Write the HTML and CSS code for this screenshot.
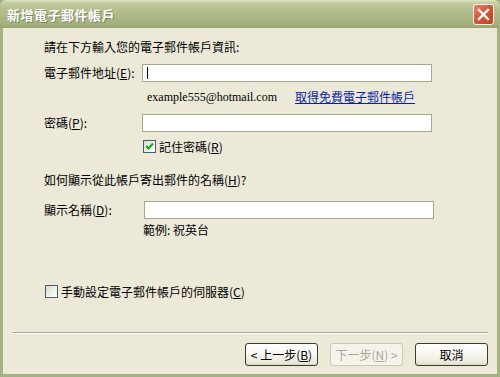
FILE: index.html
```html
<!DOCTYPE html>
<html lang="zh-Hant">
<head>
<meta charset="utf-8">
<link rel="stylesheet" href="styles.css">
</head>
<body>
<div class="window">
  <div class="titlebar">
    <span class="title">新增電子郵件帳戶</span>
    <span class="close"><svg width="13" height="13" viewBox="0 0 13 13"><path d="M2 2 L11 11 M11 2 L2 11" stroke="#fff" stroke-width="2.4" stroke-linecap="square"/></svg></span>
  </div>
  <div class="content">
    <div class="form">
      <div class="intro">請在下方輸入您的電子郵件帳戶資訊:</div>
      <div class="row row-email">
        <span class="label">電子郵件地址(<u>E</u>):</span>
        <span class="input"><span class="caret"></span></span>
      </div>
      <div class="hint">
        <span class="example">example555@hotmail.com</span>
        <a class="link">取得免費電子郵件帳戶</a>
      </div>
      <div class="row row-pass">
        <span class="label">密碼(<u>P</u>):</span>
        <span class="input"></span>
      </div>
      <div class="check check-remember">
        <span class="box checked"><svg width="9" height="9" viewBox="0 0 9 9"><path d="M1 4 L3.5 6.5 L8 1.5" stroke="#21a121" stroke-width="2" fill="none"/></svg></span>
        <span>記住密碼(<u>R</u>)</span>
      </div>
      <div class="question">如何顯示從此帳戶寄出郵件的名稱(<u>H</u>)?</div>
      <div class="row row-name">
        <span class="label label-name">顯示名稱(<u>D</u>):</span>
        <span class="input"></span>
      </div>
      <div class="sample">範例: 祝英台</div>
      <div class="check check-manual">
        <span class="box"></span>
        <span>手動設定電子郵件帳戶的伺服器(<u>C</u>)</span>
      </div>
    </div>
    <div class="footer">
      <div class="separator"></div>
      <div class="buttons">
        <span class="btn">&lt; 上一步(<u>B</u>)</span>
        <span class="btn disabled">下一步(<u>N</u>) &gt;</span>
        <span class="btn">取消</span>
      </div>
    </div>
  </div>
</div>
</body>
</html>
```

FILE: styles.css
```css
* { box-sizing: border-box; }
html, body { margin: 0; padding: 0; }
body {
  width: 500px;
  height: 377px;
  overflow: hidden;
  font-family: "Noto Sans CJK TC", "Liberation Sans", sans-serif;
  font-size: 12px;
  color: #000;
}
u { text-decoration: underline; }
.window {
  width: 500px;
  height: 377px;
  display: flex;
  flex-direction: column;
  background: #a4b185;
}
.titlebar {
  height: 28px;
  flex: none;
  display: flex;
  align-items: center;
  justify-content: space-between;
  padding: 0 6px 0 7px;
  background: linear-gradient(to bottom, #dfe5c4 0px, #c3cc9e 3px, #b4bf8d 10px, #aab684 18px, #a4b07d 24px, #97a36f 28px);
  border-radius: 6px 6px 0 0;
}
.title {
  color: #fff;
  font-weight: bold;
  font-size: 13px;
  letter-spacing: 0.5px;
  text-shadow: 1px 1px 0 #7d8660;
}
.close {
  width: 21px;
  height: 21px;
  border: 1px solid #f4f2e8;
  border-radius: 3px;
  background: linear-gradient(135deg, #e98566 0%, #d7553a 45%, #c2401f 100%);
  display: flex;
  align-items: center;
  justify-content: center;
}
.content {
  flex: 1;
  margin: 0 3px 3px 3px;
  background: #ece9d8;
  display: flex;
  flex-direction: column;
  justify-content: space-between;
}
.form { padding-left: 41px; }
.intro { margin-top: 11px; height: 16px; line-height: 16px; }
.row { display: flex; align-items: center; height: 18px; }
.label { width: 98px; flex: none; line-height: 16px; }
.label-name { width: 100px; }
.input {
  width: 290px;
  height: 18px;
  background: #fff;
  border: 1px solid #a5a98d;
  display: flex;
  align-items: center;
  padding-left: 4px;
}
.caret { width: 1px; height: 12px; background: #000; }
.row-email { margin-top: 9px; }
.hint {
  margin-top: 7px;
  height: 16px;
  line-height: 16px;
  padding-left: 103px;
  display: flex;
}
.example {
  font-family: "Liberation Serif", serif;
  font-size: 12px;
  width: 148px;
  flex: none;
}
.link { color: #0a1fa3; text-decoration: underline; }
.row-pass { margin-top: 9px; }
.check { display: flex; align-items: center; height: 13px; gap: 3px; line-height: 16px; }
.check-remember { margin-top: 8px; padding-left: 99px; }
.box {
  width: 13px;
  height: 13px;
  flex: none;
  border: 1px solid #4c5c70;
  background: linear-gradient(135deg, #dcdcd3 0%, #f2f2ec 60%, #fff 100%);
  display: flex;
  align-items: center;
  justify-content: center;
}
.question { margin-top: 19px; height: 16px; line-height: 16px; }
.row-name { margin-top: 13px; }
.sample { margin-top: 3px; height: 16px; line-height: 16px; padding-left: 99px; }
.check-manual { margin-top: 47px; padding-left: 1px; }
.footer { padding: 0 9px 8px 9px; }
.separator {
  height: 2px;
  border-top: 1px solid #aca899;
  border-bottom: 1px solid #fff;
  margin-bottom: 9px;
}
.buttons { display: flex; justify-content: flex-end; gap: 12px; }
.btn {
  width: 73px;
  height: 23px;
  border: 1px solid #3a3d2c;
  border-radius: 3px;
  background: linear-gradient(to bottom, #fff 0%, #f7f6ef 50%, #ebe8da 90%, #d9d6c4 100%);
  display: flex;
  align-items: center;
  justify-content: center;
  line-height: 16px;
}
.btn.disabled {
  border-color: #c9c7ba;
  background: #f5f4ea;
  color: #aca899;
}
```
